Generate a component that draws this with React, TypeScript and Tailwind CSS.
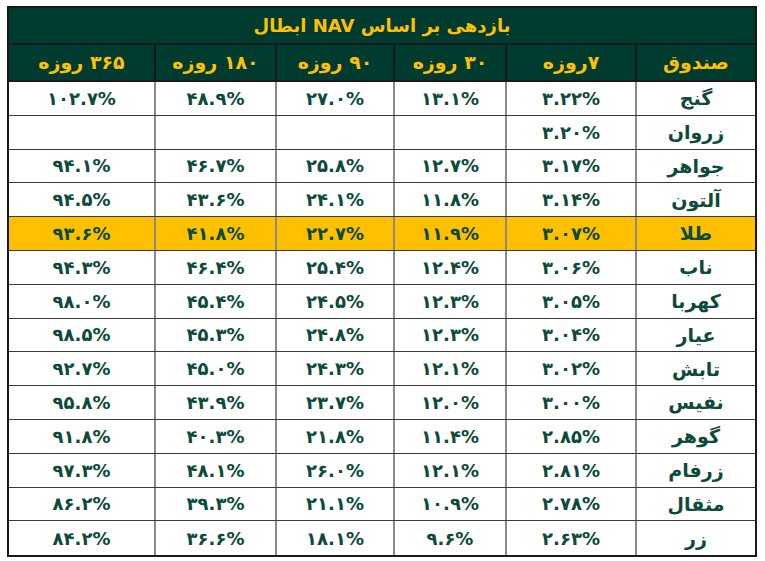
const cols = ['صندوق', '۷روزه', '۳۰ روزه', '۹۰ روزه', '۱۸۰ روزه', '۳۶۵ روزه']

// widths, right to left
const colClass = 'grid grid-cols-[120px_130px_112px_118px_121px_145px]'

type Row = { name: string; values: string[]; hi?: boolean }

const rows: Row[] = [
  { name: 'گنج', values: ['۳.۲۲%', '۱۳.۱%', '۲۷.۰%', '۴۸.۹%', '۱۰۲.۷%'] },
  { name: 'زروان', values: ['۳.۲۰%', '', '', '', ''] },
  { name: 'جواهر', values: ['۳.۱۷%', '۱۲.۷%', '۲۵.۸%', '۴۶.۷%', '۹۴.۱%'] },
  { name: 'آلتون', values: ['۳.۱۴%', '۱۱.۸%', '۲۴.۱%', '۴۳.۶%', '۹۴.۵%'] },
  { name: 'طلا', values: ['۳.۰۷%', '۱۱.۹%', '۲۲.۷%', '۴۱.۸%', '۹۳.۶%'], hi: true },
  { name: 'ناب', values: ['۳.۰۶%', '۱۲.۴%', '۲۵.۴%', '۴۶.۴%', '۹۴.۳%'] },
  { name: 'کهربا', values: ['۳.۰۵%', '۱۲.۳%', '۲۴.۵%', '۴۵.۴%', '۹۸.۰%'] },
  { name: 'عیار', values: ['۳.۰۴%', '۱۲.۳%', '۲۴.۸%', '۴۵.۳%', '۹۸.۵%'] },
  { name: 'تابش', values: ['۳.۰۲%', '۱۲.۱%', '۲۴.۳%', '۴۵.۰%', '۹۲.۷%'] },
  { name: 'نفیس', values: ['۳.۰۰%', '۱۲.۰%', '۲۳.۷%', '۴۳.۹%', '۹۵.۸%'] },
  { name: 'گوهر', values: ['۲.۸۵%', '۱۱.۴%', '۲۱.۸%', '۴۰.۳%', '۹۱.۸%'] },
  { name: 'زرفام', values: ['۲.۸۱%', '۱۲.۱%', '۲۶.۰%', '۴۸.۱%', '۹۷.۳%'] },
  { name: 'مثقال', values: ['۲.۷۸%', '۱۰.۹%', '۲۱.۱%', '۳۹.۳%', '۸۶.۲%'] },
  { name: 'زر', values: ['۲.۶۳%', '۹.۶%', '۱۸.۱%', '۳۶.۶%', '۸۴.۲%'] },
]

export default function App() {
  return (
    <div className="h-[561px] w-[765px] bg-white pl-[7px] pt-[6px] font-['DejaVu_Sans',sans-serif]">
      <div dir="rtl" className="w-[750px] border-2 border-[#1a1a1a]">
        <div className="flex h-[37px] items-center justify-center border-b-2 border-[#1a1a1a] bg-[#003b2f] text-[18px] font-bold text-[#ffc000]">
          بازدهی بر اساس NAV ابطال
        </div>
        <div className={`${colClass} h-[37px] border-b-2 border-[#1a1a1a] bg-[#003b2f] text-[19px] font-bold text-[#ffc000]`}>
          {cols.map((c, i) => (
            <div
              key={c}
              className={`flex items-center justify-center ${i < cols.length - 1 ? 'border-l-2 border-[#1a1a1a]' : ''}`}
            >
              {c}
            </div>
          ))}
        </div>
        {rows.map((r, ri) => (
          <div
            key={r.name}
            className={`${colClass} h-[33.8px] text-[18px] font-bold text-[#0c4a3a] ${
              ri < rows.length - 1 ? 'border-b border-[#3a3a3a]' : ''
            } ${r.hi ? 'bg-[#ffc000]' : 'bg-white'}`}
          >
            <div className="flex items-center justify-center border-l-2 border-[#8a8a8a] text-[19px]">{r.name}</div>
            {r.values.map((v, i) => (
              <div
                key={i}
                dir="ltr"
                className={`flex items-center justify-center ${i < r.values.length - 1 ? 'border-l-2 border-[#8a8a8a]' : ''}`}
              >
                {v}
              </div>
            ))}
          </div>
        ))}
      </div>
    </div>
  )
}
